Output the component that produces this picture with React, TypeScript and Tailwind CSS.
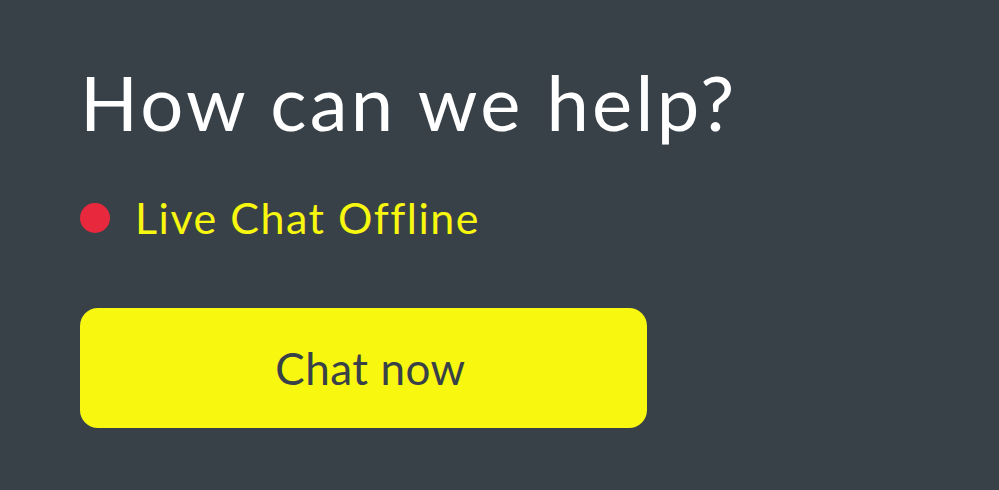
import React from 'react';

const App: React.FC = () => {
  return (
    <div className="w-[999px] h-[490px] bg-[#394148] overflow-hidden" style={{ fontFamily: 'Lato, "Noto Sans", sans-serif' }}>
      <div className="pl-[80px] pt-[58px] flex flex-col items-start">
        <h1 className="text-[76px] leading-[88px] font-normal text-white tracking-[3.3px]">How can we help?</h1>
        <div className="mt-[46px] flex items-center gap-[25px]">
          <span className="w-[30px] h-[30px] rounded-full bg-[#e8283c]" />
          <span className="text-[43px] leading-[52px] font-normal text-[#f8f70f] tracking-[1.5px]">Live Chat Offline</span>
        </div>
        <button className="mt-[64px] w-[567px] h-[120px] rounded-[18px] bg-[#f8f70f] text-[#394148] text-[44px] font-normal tracking-[0.5px] flex items-center justify-center">
          <span className="pl-[14px]">Chat now</span>
        </button>
      </div>
    </div>
  );
};

export default App;
